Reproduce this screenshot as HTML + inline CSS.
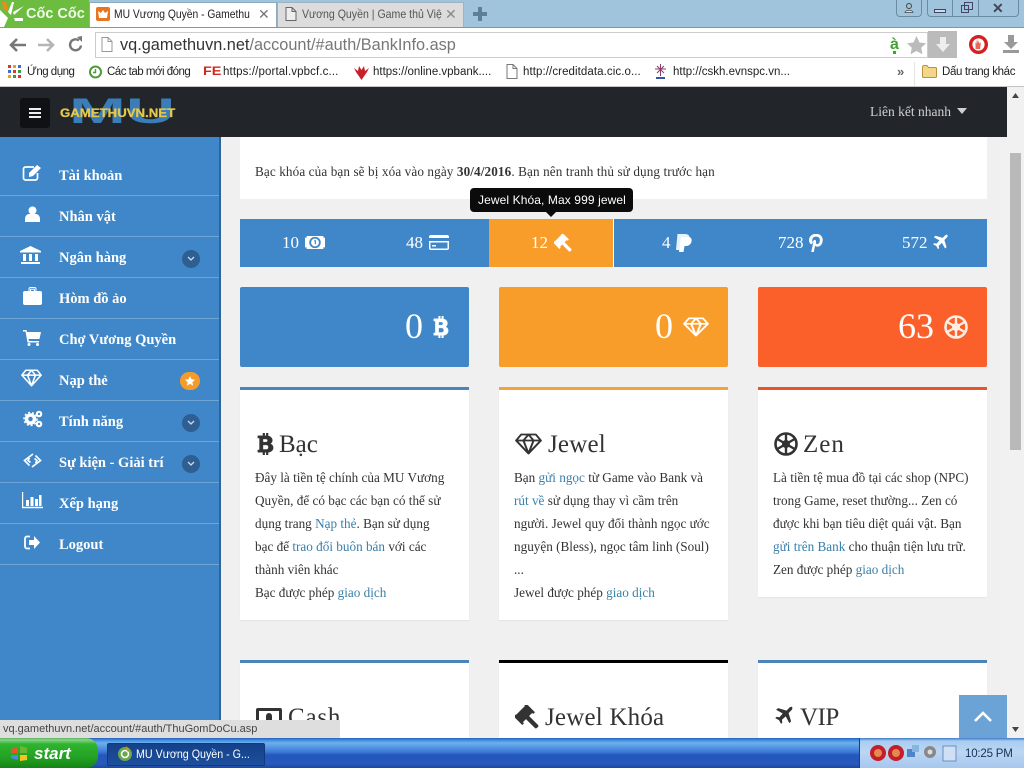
<!DOCTYPE html>
<html lang="vi"><head><meta charset="utf-8"><title>MU Vương Quyền</title>
<style>
*{box-sizing:border-box}
html,body{margin:0;padding:0;width:1024px;height:768px;overflow:hidden;background:#f0f0f0}
body{position:relative;font-family:"Liberation Serif","Noto Serif CJK SC",serif}
.a{position:absolute;display:block}
.t{position:absolute;white-space:nowrap;line-height:1}
.s{font-family:"Liberation Sans","Noto Sans CJK SC",sans-serif}
.m{font-weight:bold;font-size:14.5px;color:#fff;left:59px}
.d{position:absolute;left:0;width:219px;height:1px;background:#6fa5d6}
.b{position:absolute;left:182px;width:18px;height:18px;border-radius:50%;background:#2f5f92}
.b svg{position:absolute;left:5px;top:6px}
.st{font-size:17px;color:#fff}
.big{font-size:36px;color:#fff}
.card{position:absolute;background:#fff;box-shadow:0 1px 1px rgba(0,0,0,.05);border-top:3px solid #4a84b8;width:229px}
.h{font-size:25px;color:#333;letter-spacing:.2px}
.p{position:absolute;white-space:nowrap;font-size:13.2px;line-height:23px;color:#333}
.p a{color:#3a7fa8}
.bm{font-size:11.5px;color:#222;font-family:"Liberation Sans",sans-serif}
</style></head><body>
<svg width="0" height="0" style="position:absolute">
<defs>
<symbol id="dia" viewBox="0 0 24 22" preserveAspectRatio="none"><path d="M5.500 1.500h13l4.500 6-11 13-11-13zM1 7.500h22M7.500 7.500l4.500 13 4.500-13M7.500 7.500l4.500-6 4.500 6" fill="none" stroke="currentColor" stroke-width="1.800" stroke-linejoin="round"/></symbol>
<symbol id="btc" viewBox="0 0 20 24" preserveAspectRatio="none"><path d="M7 0h2v3h2V0h2v3.200c3 .5 5 2.300 5 4.800 0 1.800-1 3.100-2.500 3.700 2.200.6 3.500 2.200 3.500 4.300 0 3-2.200 4.800-6 5V24h-2v-3H9v3H7v-3H1v-2.500h2V5.500H1V3h6zM7 6.500V10h3.500c1.300 0 2-.7 2-1.800s-.7-1.700-2-1.700zM7 13v5h4c1.500 0 2.500-1 2.500-2.500S12.500 13 11 13z" fill="currentColor" fill-rule="evenodd" stroke="currentColor" stroke-width=".5"/></symbol>
<symbol id="zen" viewBox="0 0 24 24"><circle cx="12" cy="12" r="10.500" fill="none" stroke="currentColor" stroke-width="2.600"/><path d="M12 2v20M3.300 7l17.400 10M3.300 17L20.700 7" stroke="currentColor" stroke-width="2.400"/><circle cx="12" cy="12" r="4" fill="currentColor"/></symbol>
<symbol id="gavel" viewBox="0 0 24 24"><g transform="rotate(45 9 9)"><rect x="4" y="1" width="10" height="16" rx="1" fill="currentColor"/><rect x="2.500" y="0" width="13" height="2.500" fill="currentColor"/><rect x="2.500" y="15.500" width="13" height="2.500" fill="currentColor"/><rect x="13" y="6.800" width="15" height="4.400" rx="1.500" fill="currentColor"/></g></symbol>
<symbol id="plane" viewBox="0 0 24 24"><path d="M22.500 1.500c-1.300-1-3-.5-4 .5l-3.500 3.500-10-3-2.500 2 8 4.500-4 4.500-3.500-.5-1.500 1.500 4.500 2.500 2.500 4.500 1.500-1.500-.5-3.500 4.500-4 4.500 8 2-2-3-10 3.500-3.500c1-1 1.500-2.700.5-4z" fill="currentColor"/></symbol>
<symbol id="money" viewBox="0 0 24 16" preserveAspectRatio="none"><rect width="24" height="16" fill="currentColor"/><circle cx="12" cy="8" r="5.800" fill="none" stroke="#3f87c8" stroke-width="2.200"/><path d="M11 6h1.500v4" fill="none" stroke="#3f87c8" stroke-width="1.400"/><rect x="0" y="0" width="2" height="2" fill="#3f87c8"/><rect x="22" y="0" width="2" height="2" fill="#3f87c8"/><rect x="0" y="14" width="2" height="2" fill="#3f87c8"/><rect x="22" y="14" width="2" height="2" fill="#3f87c8"/></symbol>
</defs></svg>

<!-- Browser chrome -->
<div class="a" style="left:0;top:0;width:1024px;height:27px;background:#9fc4dc"></div>
<div class="a" style="left:0;top:0;width:89px;height:27px;background:#6cbd3f"></div>
<svg class="a" style="left:0;top:0" width="24" height="27"><path d="M0 10l8 8-4 9H0zM12 2l2 0-3 13-3-3zM24 6l-10 9-1-3zM14 18h9v3h-8z" fill="#fff"/><path d="M2 2h4l2 10-5-4z" fill="#f08a1d"/></svg>
<div class="t s" style="left:26px;top:7px;font-size:14.500px;font-weight:bold;color:#f0fae8">Cốc Cốc</div>
<div class="a" style="left:89px;top:2px;width:188px;height:26px;background:#fff;border:1px solid #8da9bd;border-bottom:0"></div>
<div class="a" style="left:96px;top:7px;width:14px;height:14px;background:#e8741d;border-radius:2px"></div>
<svg class="a" style="left:98px;top:9px" width="10" height="10"><path d="M0 2l3 2 2-3 2 3 3-2-1 7H1z" fill="#fff"/></svg>
<div class="t s" style="left:114px;top:8px;font-size:12px;color:#222;transform:scaleX(.86);transform-origin:0 0">MU Vương Quyền - Gamethu</div>
<div class="t s" style="left:258px;top:7px;font-size:14px;color:#777">✕</div>
<div class="a" style="left:277px;top:2px;width:187px;height:25px;background:#dcdcdc;border:1px solid #9db2c2;border-bottom:0"></div>
<svg class="a" style="left:285px;top:7px" width="12" height="14"><path d="M1 .5h6l4 4v9H1zM7 .5v4h4" fill="#eee" stroke="#666"/></svg>
<div class="t s" style="left:302px;top:8px;font-size:12px;color:#555;transform:scaleX(.88);transform-origin:0 0">Vương Quyền | Game thủ Việ</div>
<div class="t s" style="left:445px;top:7px;font-size:14px;color:#888">✕</div>
<svg class="a" style="left:473px;top:7px" width="14" height="14"><path d="M5 0h4v5h5v4H9v5H5V9H0V5h5z" fill="#5f7f96"/></svg>
<div class="a" style="left:896px;top:0;width:26px;height:17px;border:1px solid #6b8ba3;border-top:0;border-radius:0 0 4px 4px"></div>
<svg class="a" style="left:904px;top:3px" width="10" height="10"><circle cx="5" cy="3" r="2.500" fill="none" stroke="#444"/><path d="M1 9.500c0-3 8-3 8 0z" fill="#ddd" stroke="#444" stroke-width=".8"/></svg>
<div class="a" style="left:927px;top:0;width:92px;height:17px;border:1px solid #6b8ba3;border-top:0;border-radius:0 0 4px 4px"></div>
<div class="a" style="left:952px;top:0;width:1px;height:16px;background:#6b8ba3"></div>
<div class="a" style="left:978px;top:0;width:1px;height:16px;background:#6b8ba3"></div>
<div class="a" style="left:934px;top:9px;width:12px;height:4px;border:1px solid #446;background:#cde"></div>
<div class="a" style="left:961px;top:5px;width:8px;height:8px;border:1px solid #446"></div>
<div class="a" style="left:964px;top:2px;width:9px;height:8px;border:1px solid #446"></div>
<div class="t s" style="left:992px;top:1px;font-size:14px;color:#445;font-weight:bold">✕</div>
<div class="a" style="left:0;top:27px;width:1024px;height:60px;background:#fff;border-top:1px solid #7d98ac;border-bottom:1px solid #c5c5c5"></div>
<svg class="a" style="left:9px;top:37px" width="18" height="16"><path d="M8 2L2 8l6 6M2 8h15" fill="none" stroke="#777" stroke-width="2.600"/></svg>
<svg class="a" style="left:37px;top:37px" width="18" height="16"><path d="M10 2l6 6-6 6M16 8H1" fill="none" stroke="#b5b5b5" stroke-width="2.600"/></svg>
<svg class="a" style="left:68px;top:36px" width="16" height="18"><path d="M13 9.500a5.500 5.500 0 1 1-2-5" fill="none" stroke="#777" stroke-width="2.400"/><path d="M9 1l5-1v6z" fill="#777"/></svg>
<div class="a" style="left:95px;top:32px;width:833px;height:26px;background:#fff;border:1px solid #ccc"></div>
<svg class="a" style="left:101px;top:37px" width="12" height="15"><path d="M1 .5h6l4 4v10H1zM7 .5v4h4" fill="#fff" stroke="#999"/></svg>
<div class="t s" style="left:120px;top:37px;font-size:16.300px;color:#333">vq.gamethuvn.net<span style="color:#777">/account/#auth/BankInfo.asp</span></div>
<div class="t s" style="left:890px;top:37px;font-size:16px;font-weight:bold;color:#3da52e">à</div>
<div class="a" style="left:893px;top:51px;width:3px;height:3px;background:#3da52e"></div>
<svg class="a" style="left:907px;top:36px" width="19" height="18"><path d="M9.500 0l3 6.500 6.500.8-4.800 4.500 1.300 6.500-6-3.300-6 3.300 1.300-6.500L0 7.300l6.500-.8z" fill="#bbb"/></svg>
<div class="a" style="left:928px;top:31px;width:29px;height:27px;background:#bbb"></div>
<svg class="a" style="left:936px;top:37px" width="14" height="15"><path d="M4 0h6v7h4l-7 8-7-8h4z" fill="#eee"/></svg>
<svg class="a" style="left:969px;top:35px" width="19" height="19"><circle cx="9.500" cy="9.500" r="7.800" fill="#fff" stroke="#d81f1f" stroke-width="3.400"/><path d="M6.500 14V7l1 2V5l1 3V4l1 4V5l1 3.500 1.500-1-1 6.500z" fill="#e8665a"/></svg>
<svg class="a" style="left:1003px;top:35px" width="16" height="18"><path d="M5 0h6v7h4l-7 7-7-7h4zM0 15h16v3H0z" fill="#999"/></svg>

<!-- bookmarks -->
<svg class="a" style="left:8px;top:65px" width="14" height="14"><g><rect x="0" y="0" width="3" height="3" fill="#d33"/><rect x="5" y="0" width="3" height="3" fill="#e8a020"/><rect x="10" y="0" width="3" height="3" fill="#3a6fd8"/><rect x="0" y="5" width="3" height="3" fill="#3a6fd8"/><rect x="5" y="5" width="3" height="3" fill="#d33"/><rect x="10" y="5" width="3" height="3" fill="#3a9a4a"/><rect x="0" y="10" width="3" height="3" fill="#e8a020"/><rect x="5" y="10" width="3" height="3" fill="#3a9a4a"/><rect x="10" y="10" width="3" height="3" fill="#d33"/></g></svg>
<div class="t bm" style="left:27px;top:67px;letter-spacing:-.5px">Ứng dụng</div>
<svg class="a" style="left:88px;top:65px" width="15" height="14"><circle cx="7.500" cy="7" r="5.500" fill="none" stroke="#4f9a3a" stroke-width="2"/><path d="M7.500 4v3.500h-2.500" fill="none" stroke="#4f9a3a" stroke-width="1.400"/></svg>
<div class="t bm" style="left:107px;top:67px;letter-spacing:-.5px">Các tab mới đóng</div>
<div class="t s" style="left:203px;top:65px;font-size:12px;font-weight:bold;color:#cf2a1f;transform:scaleX(1.200);transform-origin:0 0">FE</div>
<div class="t bm" style="left:223px;top:67px;letter-spacing:.12px">https://portal.vpbcf.c...</div>
<svg class="a" style="left:354px;top:65px" width="15" height="15"><path d="M7.500 15L2 7 0 3l4 3 1-5 2.500 4L10 1l1 5 4-3-2 4z" fill="#c8202a"/></svg>
<div class="t bm" style="left:373px;top:67px">https://online.vpbank....</div>
<svg class="a" style="left:506px;top:64px" width="12" height="15"><path d="M1 .5h6l4 4v10H1zM7 .5v4h4" fill="#fff" stroke="#777"/></svg>
<div class="t bm" style="left:523px;top:67px;letter-spacing:.08px">http://creditdata.cic.o...</div>
<svg class="a" style="left:654px;top:64px" width="13" height="16"><path d="M6.500 0v12M1 5h11M3 9l7-7M3 2l7 7" stroke="#8a3a6a" stroke-width="1"/><rect x="2" y="13" width="9" height="2" fill="#35a"/></svg>
<div class="t bm" style="left:673px;top:67px">http://cskh.evnspc.vn...</div>
<div class="t s" style="left:897px;top:65px;font-size:13px;color:#666;font-weight:bold">»</div>
<div class="a" style="left:914px;top:62px;width:1px;height:24px;background:#e4e4e4"></div>
<svg class="a" style="left:922px;top:65px" width="15" height="13"><path d="M.5 2.500c0-1 .5-2 1.500-2h3l1.500 2h7c.7 0 1 .5 1 1v8c0 .7-.5 1-1 1h-12c-.7 0-1-.3-1-1z" fill="#f3d68a" stroke="#b9923f"/></svg>
<div class="t bm" style="left:942px;top:67px;letter-spacing:-.35px">Dấu trang khác</div>

<!-- page navbar -->
<div class="a" style="left:0;top:87px;width:1007px;height:50px;background:#22262b"></div>
<div class="a" style="left:20px;top:98px;width:30px;height:30px;background:#0f1114;border-radius:3px"></div>
<div class="a" style="left:29px;top:108px;width:12px;height:2px;background:#eee"></div>
<div class="a" style="left:29px;top:112px;width:12px;height:2px;background:#eee"></div>
<div class="a" style="left:29px;top:116px;width:12px;height:2px;background:#eee"></div>
<div class="t s" style="left:69px;top:94px;font-size:35px;font-weight:bold;color:#3a7db8;transform:scaleX(1.950);transform-origin:0 0">MU</div>
<div class="t s" style="left:60px;top:107px;font-size:12px;font-weight:bold;color:#e6c84c;-webkit-text-stroke:.3px #e6c84c;transform:scaleX(1.100);transform-origin:0 0">GAMETHUVN.NET</div>
<div class="t" style="left:870px;top:105px;font-size:13.500px;color:#d0d0d0">Liên kết nhanh</div>
<svg class="a" style="left:957px;top:108px" width="10" height="6"><path d="M0 0h10L5 6z" fill="#d0d0d0"/></svg>

<!-- sidebar -->
<div class="a" style="left:0;top:137px;width:221px;height:601px;background:#3f87c8;border-right:2px solid #2d6599"></div>
<div class="d" style="top:195px"></div><div class="d" style="top:236px"></div><div class="d" style="top:277px"></div><div class="d" style="top:318px"></div><div class="d" style="top:359px"></div><div class="d" style="top:400px"></div><div class="d" style="top:441px"></div><div class="d" style="top:482px"></div><div class="d" style="top:523px"></div><div class="d" style="top:564px"></div>
<div class="t m" style="top:169px">Tài khoản</div>
<div class="t m" style="top:210px">Nhân vật</div>
<div class="t m" style="top:251px">Ngân hàng</div>
<div class="t m" style="top:292px">Hòm đồ ảo</div>
<div class="t m" style="top:333px">Chợ Vương Quyền</div>
<div class="t m" style="top:374px">Nạp thẻ</div>
<div class="t m" style="top:415px">Tính năng</div>
<div class="t m" style="top:456px">Sự kiện - Giải trí</div>
<div class="t m" style="top:497px">Xếp hạng</div>
<div class="t m" style="top:538px">Logout</div>
<svg class="a" style="left:22px;top:164px" width="20" height="18"><path d="M12 3H3.500A2 2 0 0 0 1.500 5v9a2 2 0 0 0 2 2h10a2 2 0 0 0 2-2V9" fill="none" stroke="#fff" stroke-width="1.700"/><path d="M7 9l8-8 4 3-8 8-4 1z" fill="#fff"/></svg>
<svg class="a" style="left:25px;top:206px" width="15" height="16"><circle cx="7.500" cy="4.500" r="4" fill="#fff"/><path d="M0 16v-3c0-3 2-5 4-5h7c2 0 4 2 4 5v3z" fill="#fff"/></svg>
<svg class="a" style="left:20px;top:246px" width="21" height="18"><path d="M10.500 0L21 5v1.500H0V5zM1 16h19v2H1zM3 8h3v7H3zM9 8h3v7H9zM15 8h3v7h-3z" fill="#fff"/></svg>
<svg class="a" style="left:23px;top:287px" width="19" height="18"><path d="M6 4V2c0-1 .5-1.500 1.500-1.500h4c1 0 1.500.5 1.500 1.500v2M7.500 4V2.200h4V4" fill="none" stroke="#fff" stroke-width="1"/><rect x="0" y="4" width="19" height="14" rx="2" fill="#fff"/></svg>
<svg class="a" style="left:23px;top:330px" width="18" height="16"><path d="M0 0h3.500l.5 2H18l-1.500 7H5.500l.5 2h10v1.500H4.500L2.500 1.500H0z" fill="#fff"/><circle cx="6" cy="14.500" r="1.500" fill="#fff"/><circle cx="14.500" cy="14.500" r="1.500" fill="#fff"/></svg>
<svg class="a" style="left:21px;top:369px;color:#fff" width="21" height="18"><use href="#dia"/></svg>
<svg class="a" style="left:23px;top:410px" width="20" height="18"><circle cx="7.500" cy="9" r="4" fill="none" stroke="#fff" stroke-width="3.500"/><circle cx="16" cy="4" r="2.200" fill="none" stroke="#fff" stroke-width="2.200"/><circle cx="16" cy="14" r="2.200" fill="none" stroke="#fff" stroke-width="2.200"/><circle cx="7.500" cy="9" r="6.500" fill="none" stroke="#fff" stroke-width="1.500" stroke-dasharray="2 2"/></svg>
<svg class="a" style="left:23px;top:453px" width="19" height="15"><path d="M10 1L1.500 7.500l5 5M9 14l8.500-6.500-5-5M6.500 5l-1.500 2.500 2.500 2M12.500 10l1.500-2.500-2.500-2" fill="none" stroke="#fff" stroke-width="1.700"/></svg>
<svg class="a" style="left:22px;top:492px" width="21" height="17"><path d="M.5 0v15.500H21" fill="none" stroke="#fff" stroke-width="1.400"/><path d="M4 8h3v6H4zM8.500 5h3v9h-3zM13 7h3v7h-3zM17 3h2.500v11H17z" fill="#fff"/></svg>
<svg class="a" style="left:24px;top:535px" width="16" height="15"><path d="M6 1.500H3a2 2 0 0 0-2 2v8a2 2 0 0 0 2 2h3" fill="none" stroke="#fff" stroke-width="1.800"/><path d="M5 5h5V1l6 6.500-6 6.500v-4H5z" fill="#fff"/></svg>
<div class="b" style="top:250px"><svg width="8" height="6"><path d="M1 1l3 3 3-3" fill="none" stroke="#cde" stroke-width="1.300"/></svg></div>
<div class="b" style="top:414px"><svg width="8" height="6"><path d="M1 1l3 3 3-3" fill="none" stroke="#cde" stroke-width="1.300"/></svg></div>
<div class="b" style="top:455px"><svg width="8" height="6"><path d="M1 1l3 3 3-3" fill="none" stroke="#cde" stroke-width="1.300"/></svg></div>
<div class="a" style="left:180px;top:372px;width:20px;height:18px;border-radius:9px;background:#f59b2c"></div>
<svg class="a" style="left:185px;top:376px" width="10" height="10"><path d="M5 0l1.500 3.300 3.500.4-2.600 2.400.7 3.500L5 7.900 1.900 9.600l.7-3.500L0 3.700l3.500-.4z" fill="#fff"/></svg>

<!-- alert -->
<div class="a" style="left:240px;top:137px;width:747px;height:62px;background:#fff"></div>
<div class="t" style="left:255px;top:165px;font-size:13.200px;color:#333;letter-spacing:.105px">Bạc khóa của bạn sẽ bị xóa vào ngày <b>30/4/2016</b>. Bạn nên tranh thủ sử dụng trước hạn</div>

<!-- stats -->
<div class="a" style="left:240px;top:219px;width:747px;height:48px;background:#3f87c8"></div>
<div class="a" style="left:489px;top:219px;width:125px;height:48px;background:#f99d2a;border-right:1px solid #fff"></div>
<div class="t st" style="left:282px;top:234px">10</div><svg class="a" style="left:305px;top:236px;color:#fff" width="20" height="13"><use href="#money"/></svg>
<div class="t st" style="left:406px;top:234px">48</div>
<svg class="a" style="left:429px;top:235px" width="20" height="15"><rect width="20" height="15" rx="2" fill="#fff"/><rect y="3" width="20" height="3" fill="#3f87c8"/><rect x="1.500" y="7.500" width="17" height="6" fill="#3f87c8"/><rect x="3" y="10" width="4" height="1.500" fill="#fff"/></svg>
<div class="t st" style="left:531px;top:234px">12</div><svg class="a" style="left:554px;top:234px;color:#fff" width="18" height="18"><use href="#gavel"/></svg>
<div class="t st" style="left:662px;top:234px">4</div>
<svg class="a" style="left:676px;top:234px" width="16" height="18"><path d="M1.500 0h7.500c3.500 0 5 2 4.500 5-.5 3.500-3 5.200-6 5.200H5.500L4.500 16H0z" fill="#e8f2fa"/><path d="M5 3h7.500c2.500 0 3.500 2 3 4.500-.6 3-3 4.500-5.500 4.500H8.500L7.500 18H3z" fill="#fff"/></svg>
<div class="t st" style="left:778px;top:234px">728</div>
<svg class="a" style="left:809px;top:234px" width="14" height="18"><path d="M7 0c4 0 6.500 2.500 6.500 6 0 3.500-2 6.500-5 6.500-1.200 0-2-.6-2.500-1.300L4.500 18H2.500l2-9.500c-.5-1 .2-2.500 1.200-2.500s1.400 1 1 2.500C6.500 10 7.500 10.500 8.800 10.200c1.500-.4 2.300-2.200 2.300-4 0-2.300-1.800-3.800-4.100-3.800S3 4 3 6.500c0 1 .3 1.600.7 2.300L2.200 10.300C.8 9 .2 7.800.2 6.200.2 2.800 3 0 7 0z" fill="#fff" stroke="#fff" stroke-width=".5"/></svg>
<div class="t st" style="left:902px;top:234px">572</div><svg class="a" style="left:932px;top:234px;color:#fff" width="17" height="17"><use href="#plane"/></svg>

<!-- tooltip -->
<div class="a" style="left:470px;top:188px;width:163px;height:24px;background:#0b0b0b;border-radius:4px"></div>
<div class="a" style="left:546px;top:212px;width:0;height:0;border-left:5px solid transparent;border-right:5px solid transparent;border-top:5px solid #0b0b0b"></div>
<div class="t s" style="left:478px;top:194px;font-size:12px;color:#fff;letter-spacing:.1px">Jewel Khóa, Max 999 jewel</div>

<!-- big tiles -->
<div class="a" style="left:240px;top:287px;width:229px;height:80px;background:#3f87c8;border-radius:2px"></div>
<div class="a" style="left:499px;top:287px;width:229px;height:80px;background:#f99d2a;border-radius:2px"></div>
<div class="a" style="left:758px;top:287px;width:229px;height:80px;background:#fb5f2a;border-radius:2px"></div>
<div class="t big" style="left:405px;top:308px">0</div>
<svg class="a" style="left:433px;top:316px;color:#fff" width="16" height="22"><use href="#btc"/></svg>
<div class="t big" style="left:655px;top:308px">0</div>
<svg class="a" style="left:683px;top:317px;color:#fff" width="26" height="20"><use href="#dia"/></svg>
<div class="t big" style="left:898px;top:308px">63</div>
<svg class="a" style="left:944px;top:315px;color:#ffeee4" width="24" height="24"><use href="#zen"/></svg>

<!-- cards -->
<div class="card" style="left:240px;top:387px;height:233px"></div>
<div class="card" style="left:499px;top:387px;height:233px;border-top-color:#f2a33c"></div>
<div class="card" style="left:758px;top:387px;height:210px;border-top-color:#e8552a"></div>
<div class="card" style="left:240px;top:660px;height:100px"></div>
<div class="card" style="left:499px;top:660px;height:100px;border-top-color:#000"></div>
<div class="card" style="left:758px;top:660px;height:100px"></div>

<svg class="a" style="left:257px;top:433px;color:#333" width="17" height="22"><use href="#btc"/></svg>
<div class="t h" style="left:279px;top:432px;letter-spacing:0">Bạc</div>
<svg class="a" style="left:515px;top:433px;color:#333" width="27" height="22"><use href="#dia"/></svg>
<div class="t h" style="left:548px;top:432px">Jewel</div>
<svg class="a" style="left:774px;top:432px;color:#333" width="24" height="24"><use href="#zen"/></svg>
<div class="t h" style="left:803px;top:432px;letter-spacing:1px">Zen</div>

<div class="p" style="left:255px;top:466px">Đây là tiền tệ chính của MU Vương<br>Quyền, để có bạc các bạn có thể sử<br>dụng trang <a>Nạp thẻ</a>. Bạn sử dụng<br>bạc để <a>trao đổi buôn bán</a> với các<br>thành viên khác<br>Bạc được phép <a>giao dịch</a></div>
<div class="p" style="left:514px;top:466px">Bạn <a>gửi ngọc</a> từ Game vào Bank và<br><a>rút về</a> sử dụng thay vì cầm trên<br>người. Jewel quy đổi thành ngọc ước<br>nguyện (Bless), ngọc tâm linh (Soul)<br>...<br>Jewel được phép <a>giao dịch</a></div>
<div class="p" style="left:773px;top:466px">Là tiền tệ mua đồ tại các shop (NPC)<br>trong Game, reset thường... Zen có<br>được khi bạn tiêu diệt quái vật. Bạn<br><a>gửi trên Bank</a> cho thuận tiện lưu trữ.<br>Zen được phép <a>giao dịch</a></div>

<div class="a" style="left:256px;top:708px;width:26px;height:22px;border:3px solid #333;border-radius:2px"></div>
<div class="a" style="left:266px;top:713px;width:6px;height:14px;background:#333;border-radius:3px"></div>
<div class="t h" style="left:288px;top:705px;letter-spacing:.8px">Cash</div>
<svg class="a" style="left:515px;top:705px;color:#333" width="24" height="24"><use href="#gavel"/></svg>
<div class="t h" style="left:545px;top:705px">Jewel Khóa</div>
<svg class="a" style="left:774px;top:706px;color:#333" width="20" height="20"><use href="#plane"/></svg>
<div class="t h" style="left:800px;top:705px;letter-spacing:-.5px">VIP</div>

<!-- scrollbar -->
<div class="a" style="left:1007px;top:87px;width:17px;height:651px;background:#f1f1f1"></div>
<div class="a" style="left:1010px;top:153px;width:11px;height:297px;background:#b9b9b9"></div>
<svg class="a" style="left:1012px;top:93px" width="7" height="5"><path d="M3.500 0L7 5H0z" fill="#444"/></svg>
<svg class="a" style="left:1012px;top:727px" width="7" height="5"><path d="M0 0h7L3.500 5z" fill="#444"/></svg>

<!-- back to top -->
<div class="a" style="left:959px;top:695px;width:48px;height:43px;background:#6ba3d6"></div>
<svg class="a" style="left:974px;top:711px" width="18" height="12"><path d="M1 10l8-8 8 8" fill="none" stroke="#fff" stroke-width="2.600"/></svg>

<!-- status bubble -->
<div class="a" style="left:0;top:720px;width:340px;height:18px;background:#dedede"></div>
<div class="t s" style="left:3px;top:724px;font-size:11px;color:#444">vq.gamethuvn.net/account/#auth/ThuGomDoCu.asp</div>

<!-- taskbar -->
<div class="a" style="left:0;top:738px;width:1024px;height:30px;background:linear-gradient(#2a5fb8 0,#3f8be0 2px,#6db0ec 5px,#3b79d6 14px,#2457bb 17px,#2859bd 26px,#1d47a0 30px)"></div>
<div class="a" style="left:0;top:738px;width:98px;height:30px;background:linear-gradient(#5cb65c 0,#8ad08a 2px,#2fb52f 6px,#23a023 20px,#158415 30px);border-radius:0 12px 12px 0"></div>
<svg class="a" style="left:11px;top:746px" width="17" height="15"><path d="M0 3l7-2v6H0z" fill="#e5572b"/><path d="M9 0l7 2v5H9z" fill="#6ab82f"/><path d="M0 9h7v5l-7-2z" fill="#4a8ae0"/><path d="M9 9h7v5l-7 1z" fill="#f3c51f"/></svg>
<div class="t s" style="left:34px;top:745px;font-size:17px;font-weight:bold;font-style:italic;color:#fff">start</div>
<div class="a" style="left:107px;top:743px;width:158px;height:23px;background:linear-gradient(#15408a,#1d4f9c);border-radius:2px;border:1px solid #123a7a"></div>
<svg class="a" style="left:117px;top:746px" width="16" height="16"><circle cx="8" cy="8" r="7" fill="#6aa84f"/><circle cx="8" cy="8" r="3.500" fill="none" stroke="#fff" stroke-width="1.600"/><path d="M9 0l3 3-2 3z" fill="#f08a1d"/></svg>
<div class="t s" style="left:136px;top:748px;font-size:12px;color:#fff;transform:scaleX(.89);transform-origin:0 0">MU Vương Quyền - G...</div>
<div class="a" style="left:859px;top:738px;width:165px;height:30px;background:linear-gradient(#3f7cc8 0,#a9cdf0 3px,#bcd6f2 14px,#a6c7ee 30px);border-left:1px solid #16407f"></div>
<svg class="a" style="left:869px;top:744px" width="92" height="18"><circle cx="9" cy="9" r="8" fill="#c61d2a"/><circle cx="9" cy="9" r="4" fill="#e28a50"/><circle cx="27" cy="9" r="8" fill="#c61d2a"/><circle cx="27" cy="9" r="4" fill="#e28a50"/><rect x="38" y="5" width="8" height="8" fill="#4a86c8"/><rect x="43" y="1" width="7" height="7" fill="#8ab4e0"/><circle cx="61" cy="8" r="6" fill="#888"/><circle cx="61" cy="8" r="2.500" fill="#ddd"/><rect x="74" y="2" width="13" height="15" fill="#cfe0f5" stroke="#6a8fc0"/></svg>
<div class="t s" style="left:965px;top:749px;font-size:11.500px;color:#15305a;letter-spacing:-.2px">10:25 PM</div>
</body></html>
